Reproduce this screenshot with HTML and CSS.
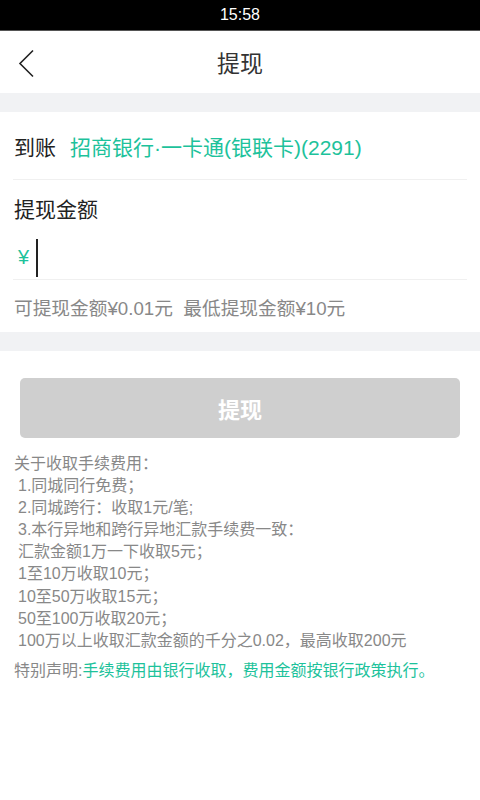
FILE: index.html
```html
<!DOCTYPE html>
<html lang="zh-CN">
<head>
<meta charset="utf-8">
<title>提现</title>
<link rel="stylesheet" href="styles.css">
</head>
<body>
<div class="statusbar">15:58</div>
<header class="topbar">
  <svg class="back" width="18" height="30" viewBox="0 0 18 30"><path d="M16 1.5 L3 14.5 L16 27.5" fill="none" stroke="#222" stroke-width="1.6"/></svg>
  <h1 class="title">提现</h1>
</header>
<div class="band"></div>
<section class="card">
  <div class="row account">
    <span class="label">到账</span>
    <span class="bank">招商银行·一卡通(银联卡)(2291)</span>
  </div>
  <div class="divider"></div>
  <div class="amount-title">提现金额</div>
  <div class="amount-input">
    <span class="yen">¥</span><span class="cursor"></span>
  </div>
  <div class="divider"></div>
  <div class="hint">可提现金额¥0.01元&nbsp;&nbsp;最低提现金额¥10元</div>
</section>
<div class="band band2"></div>
<div class="btn-wrap"><button class="btn">提现</button></div>
<div class="notes">
  <p>关于收取手续费用：</p>
  <p class="ind">1.同城同行免费；</p>
  <p class="ind">2.同城跨行：收取1元/笔;</p>
  <p class="ind">3.本行异地和跨行异地汇款手续费一致：</p>
  <p class="ind">汇款金额1万一下收取5元；</p>
  <p class="ind">1至10万收取10元；</p>
  <p class="ind">10至50万收取15元；</p>
  <p class="ind">50至100万收取20元；</p>
  <p class="ind">100万以上收取汇款金额的千分之0.02，最高收取200元</p>
  <p class="special">特别声明:<span class="green">手续费用由银行收取，费用金额按银行政策执行。</span></p>
</div>
</body>
</html>
```
FILE: styles.css
```css
* { box-sizing: border-box; margin: 0; padding: 0; }
html, body { width: 480px; height: 800px; background: #fff; }
body { font-family: "Liberation Sans", "Noto Sans CJK SC", sans-serif; color: #222; }
.statusbar {
  height: 31px; background: #000; color: #fff; border-bottom: 1px solid #555;
  display: flex; align-items: center; justify-content: center;
  font-family: "Liberation Sans", sans-serif; font-size: 16px;
}
.topbar { height: 62px; display: flex; align-items: center; justify-content: center; position: relative; }
.back { position: absolute; left: 17px; top: 18px; }
.title { font-size: 23px; font-weight: normal; color: #333; }
.band { height: 19px; background: #f1f2f4; }
.card { padding: 0 13px; }
.account { height: 67px; display: flex; align-items: center; padding-left: 1px; font-size: 21px; }
.label { color: #222; margin-right: 14px; }
.bank { color: #1dc29b; }
.divider { height: 1px; background: #f0f0f0; }
.amount-title { font-size: 21px; padding-left: 1px; height: 56px; display: flex; align-items: center; }
.amount-input { height: 43px; display: flex; align-items: center; padding-left: 5px; }
.yen { color: #1dc29b; font-size: 20px; }
.cursor { width: 2px; height: 38px; background: #222; margin-left: 7px; }
.hint { height: 52px; display: flex; align-items: center; font-size: 18.7px; color: #888; padding-left: 1px; }
.band2 { height: 19px; }
.btn-wrap { padding: 27px 20px 0; }
.btn {
  width: 100%; height: 60px; border: none; border-radius: 5px; background: #cfcfcf;
  color: #fff; font-size: 22px; font-weight: bold; font-family: inherit;
}
.notes { padding: 15px 14px 0; font-size: 16px; color: #888; line-height: 22.1px; }
.notes .ind { padding-left: 4px; }
.notes .special { margin-top: 8px; }
.green { color: #1dc29b; }
```
